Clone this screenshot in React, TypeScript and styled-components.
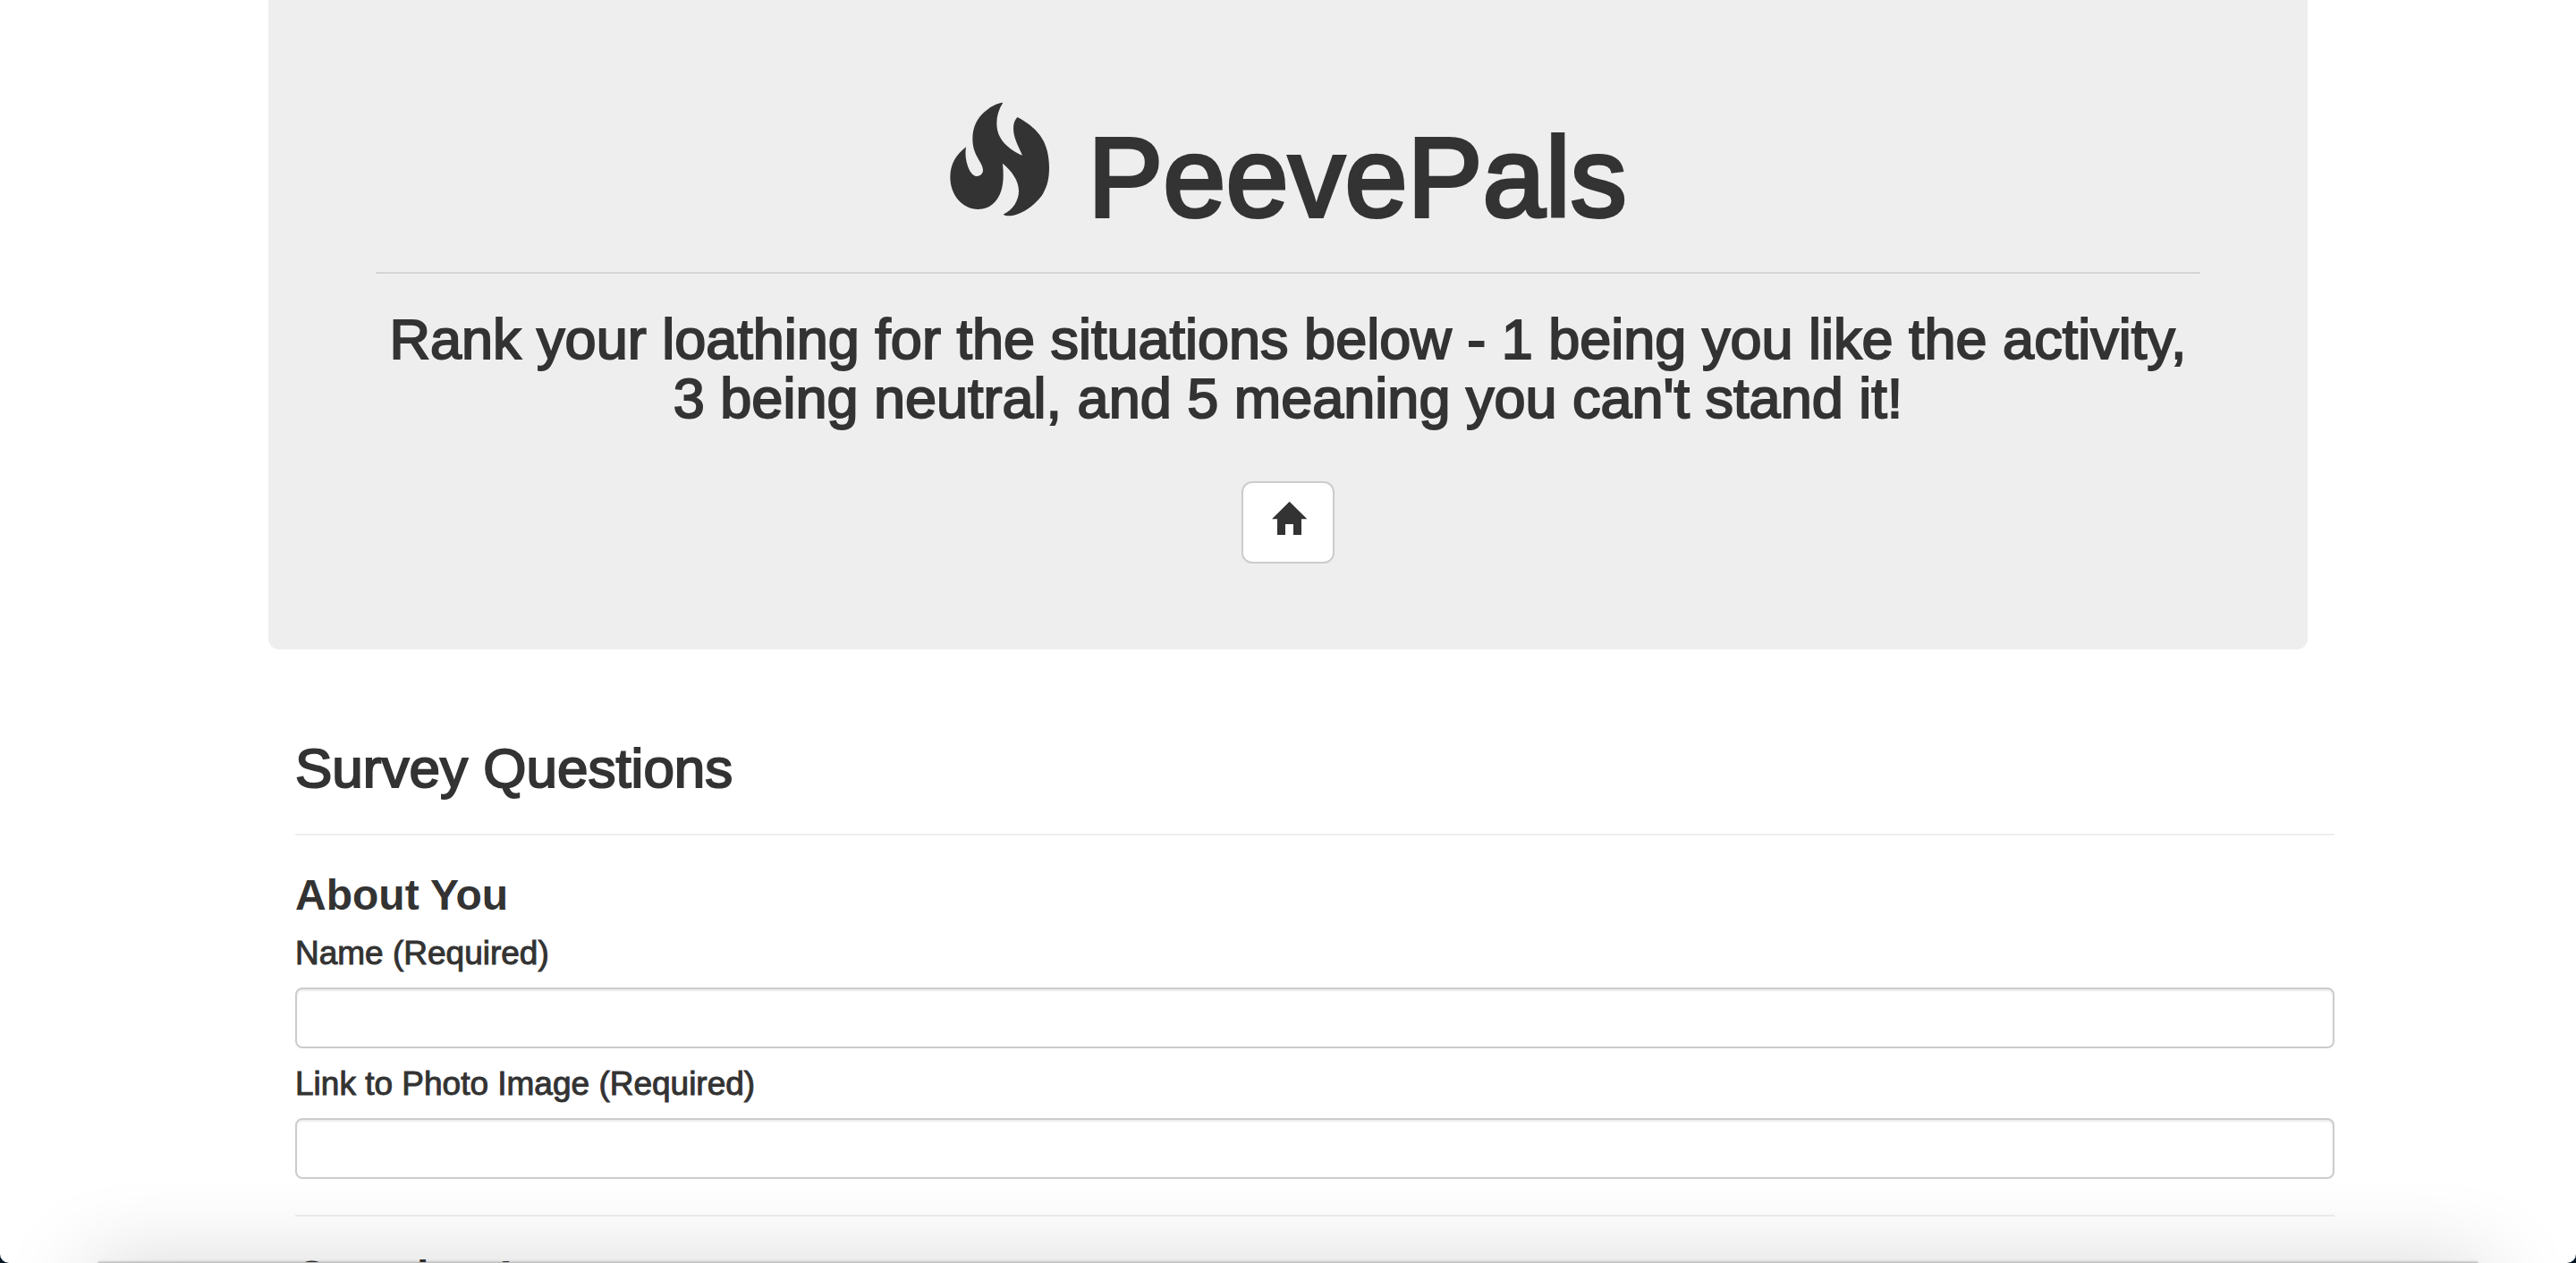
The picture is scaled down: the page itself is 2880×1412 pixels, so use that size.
import React from 'react';
import styled, { createGlobalStyle } from 'styled-components';

const GlobalStyle = createGlobalStyle`
  *, *::before, *::after {
    box-sizing: border-box;
  }
  body {
    margin: 0;
    background: #fff;
    color: #333;
    font-family: "Helvetica Neue", "Liberation Sans", Arial, sans-serif;
  }
`;

const Viewport = styled.div`
  height: 100vh;
  overflow: hidden;
`;

const Container = styled.div`
  width: 100%;
  max-width: 2340px;
  margin: 0 auto;
  padding: 0 30px;
`;

const Jumbotron = styled.header`
  display: flex;
  flex-direction: column;
  align-items: center;
  padding: 114px 120px 96px;
  border-radius: 0 0 12px 12px;
  background: #eee;
  text-align: center;
`;

const Brand = styled.h1`
  display: flex;
  align-items: baseline;
  justify-content: center;
  gap: 38px;
  margin: 0;
  font-size: 126px;
  font-weight: 400;
  line-height: 138px;
  -webkit-text-stroke: 4px #333;
`;

const FlameIcon = styled.svg`
  width: 117px;
  height: 128px;
  flex: none;
  fill: #333;
  stroke: none;
`;

const Rule = styled.hr<{ $color?: string }>`
  align-self: stretch;
  height: 2px;
  margin: 40px 0;
  border: 0;
  background: ${({ $color }) => $color ?? '#eee'};
`;

const JumbotronRule = styled(Rule)`
  margin-top: 36px;
`;

const Title = styled.h2<{ $size: number }>`
  margin: 0;
  font-size: ${({ $size }) => $size}px;
  font-weight: 400;
  line-height: 66px;
  -webkit-text-stroke: 2px #333;
`;

const HomeLink = styled.a`
  display: flex;
  margin-top: 60px;
  padding: 20px 30px 28px;
  border: 2px solid #ccc;
  border-radius: 12px;
  background: #fff;
  color: #333;
`;

const HomeIcon = styled.svg`
  width: 40px;
  height: 40px;
  overflow: visible;
  fill: currentColor;
`;

const Survey = styled.form`
  margin: 100px -30px 0 30px;
`;

const SectionTitle = styled.h3`
  margin: 0 0 12px;
  font-size: 48px;
  font-weight: 700;
  line-height: 54px;
`;

const Fields = styled.div`
  display: flex;
  flex-direction: column;
  gap: 14px;
`;

const Field = styled.div`
  display: flex;
  flex-direction: column;
  gap: 12px;
`;

const Label = styled.label`
  font-size: 37px;
  line-height: 52px;
  -webkit-text-stroke: 1px #333;
`;

const TextInput = styled.input`
  width: 100%;
  height: 68px;
  padding: 12px 24px;
  border: 2px solid #ccc;
  border-radius: 8px;
  background: #fff;
  color: #555;
  font: inherit;
  font-size: 28px;
  box-shadow: inset 0 2px 2px rgba(0, 0, 0, 0.075);
`;

/* Soft shadow cast upwards by the window that sits under the bottom edge. */
const BottomShadow = styled.div`
  position: fixed;
  right: 110px;
  bottom: -40px;
  left: 110px;
  height: 41px;
  pointer-events: none;
  background: #c0c0c0;
  box-shadow: 0 0 3px rgba(0, 0, 0, 0.3), 0 20px 100px 10px rgba(0, 0, 0, 0.22);
`;

const WindowCorners = styled.div`
  position: fixed;
  inset: 0;
  pointer-events: none;
  border-radius: 0 0 10px 10px;
  box-shadow: 0 0 0 10px #061622;
`;

const fields = [
  { id: 'name', label: 'Name (Required)' },
  { id: 'photo', label: 'Link to Photo Image (Required)' },
];

export default function App() {
  return (
    <Viewport>
      <GlobalStyle />
      <Container>
        <Jumbotron>
          <Brand>
            <FlameIcon viewBox="69 72 351 384" aria-hidden="true">
              <path d="M250 74C236 96 229 118 229 143C229 198 268 230 315 251C299 215 285 191 285 160C285 145 289 133 298 123C327 137 354 158 373 182C396 212 405 252 405 292C405 328 399 354 384 380C362 414 312 453 270 454C262 454 255 453 251 449C284 434 303 401 303 371C303 335 279 303 249 278C252 310 253 341 244 370C232 407 205 432 167 432C116 432 73 386 73 324C73 281 92 250 126 223C122 249 126 276 137 299C143 311 152 321 163 321C175 321 183 311 183 301C183 274 148 254 148 196C148 156 163 127 191 103C210 86 231 76 250 74Z" />
            </FlameIcon>
            PeevePals
          </Brand>
          <JumbotronRule $color="#d5d5d5" />
          <Title $size={63}>
            Rank your loathing for the situations below - 1 being you like the activity, 3 being
            neutral, and 5 meaning you can't stand it!
          </Title>
          <HomeLink href="#" aria-label="Home">
            <HomeIcon viewBox="120 90 120 120" aria-hidden="true">
              <path d="M185 92L244 151H225V204H198V168H171V204H144V151H126Z" />
            </HomeIcon>
          </HomeLink>
        </Jumbotron>
        <Survey>
          <Title $size={62}>Survey Questions</Title>
          <Rule />
          <SectionTitle>About You</SectionTitle>
          <Fields>
            {fields.map(({ id, label }) => (
              <Field key={id}>
                <Label htmlFor={id}>{label}</Label>
                <TextInput id={id} name={id} type="text" required />
              </Field>
            ))}
          </Fields>
          <Rule />
          <SectionTitle>Question 1</SectionTitle>
        </Survey>
      </Container>
      <BottomShadow />
      <WindowCorners />
    </Viewport>
  );
}
